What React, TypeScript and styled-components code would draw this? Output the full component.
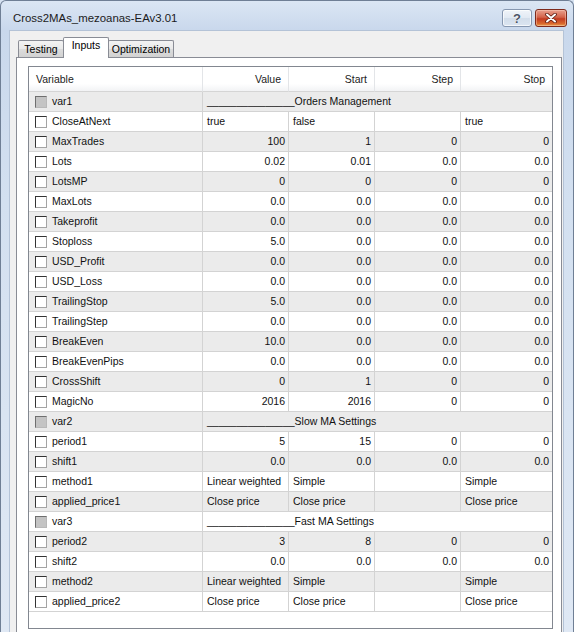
import React from "react"
import styled, { createGlobalStyle } from "styled-components"

const GlobalStyle = createGlobalStyle`
  html, body {
    margin: 0;
    padding: 0;
    overflow: hidden;
  }
  body {
    width: 574px;
    height: 632px;
    background: #d6e2f1;
    font-family: "Liberation Sans", Arial, sans-serif;
  }
`

const Frame = styled.div`
  box-sizing: border-box;
  width: 574px;
  height: 632px;
  display: flex;
  flex-direction: column;
  border: 1px solid #6f7f95;
  border-bottom: none;
  border-radius: 6px 6px 0 0;
  background: linear-gradient(180deg, #dbe6f4 0, #c9d8ec 29px, #d3e0f0 200px, #dfe8f4 632px);
  overflow: hidden;
`

const TitleBar = styled.div`
  height: 29px;
  flex-shrink: 0;
  display: flex;
  align-items: flex-start;
  padding: 0 6px 0 12px;
`

const Title = styled.div`
  flex: 1;
  margin-top: 10px;
  line-height: 14px;
  font-size: 11.4px;
  color: #1b1b1b;
  white-space: nowrap;
`

const CaptionButtons = styled.div`
  display: flex;
  gap: 3px;
  margin-top: 8px;
`

const CaptionButton = styled.div<{ $close?: boolean }>`
  box-sizing: border-box;
  width: ${(p) => (p.$close ? 32 : 30)}px;
  height: 18px;
  border-radius: 3px;
  display: flex;
  align-items: center;
  justify-content: center;
  border: 1px solid ${(p) => (p.$close ? "#7d2a1c" : "#8697b0")};
  background: ${(p) =>
    p.$close
      ? "linear-gradient(180deg, #e8a08e 0, #d4634a 45%, #c23b22 55%, #d9682c 85%, #e9a050 100%)"
      : "linear-gradient(180deg, #f0f4f9 0, #e1e9f3 50%, #d2ddea 51%, #dbe5f1 100%)"};
  box-shadow: inset 0 0 0 1px ${(p) => (p.$close ? "rgba(255,210,190,0.45)" : "rgba(255,255,255,0.7)")};
  font-size: 13px;
  font-weight: bold;
  color: #4a5466;
  text-shadow: 0 0 1px #fff, 0 0 1px #fff;
`

const Client = styled.div`
  flex: 1;
  min-height: 0;
  display: flex;
  flex-direction: column;
  margin: 0 9px 0 8px;
  border: 1px solid #b4c3d7;
  border-bottom: none;
  background: #f0f0f0;
  padding: 6px 1px 0 6px;
`

const TabStrip = styled.div`
  display: flex;
  align-items: flex-end;
  height: 20px;
  margin-left: 2px;
  position: relative;
  z-index: 1;
`

const Tab = styled.div<{ $active?: boolean; $w: number }>`
  box-sizing: border-box;
  width: ${(p) => p.$w}px;
  height: ${(p) => (p.$active ? 21 : 17)}px;
  margin-bottom: ${(p) => (p.$active ? -1 : 0)}px;
  margin-left: -1px;
  border: 1px solid #898c95;
  border-bottom: none;
  border-radius: 2px 2px 0 0;
  background: ${(p) =>
    p.$active ? "#ffffff" : "linear-gradient(180deg, #f3f3f3 0, #e9e9e9 50%, #dcdcdc 51%, #d2d2d2 100%)"};
  font-size: 10.5px;
  color: #000;
  text-align: center;
  line-height: ${(p) => (p.$active ? 15 : 16)}px;
  &:first-child {
    margin-left: 0;
  }
`

const Panel = styled.div`
  flex: 1;
  min-height: 0;
  border: 1px solid #898c95;
  border-bottom: none;
  background: #fff;
  padding: 8px 8px 0 11px;
`

const Grid = styled.div`
  box-sizing: border-box;
  height: 563px;
  border: 1px solid #828790;
  background: #fff;
  display: grid;
  grid-template-columns: 174px 86px 86px 86px 1fr;
  grid-auto-rows: 20px;
  grid-template-rows: 25px;
  align-content: start;
  font-size: 10.5px;
  color: #111;
`

const HeadCell = styled.div<{ $left?: boolean; $last?: boolean }>`
  box-sizing: border-box;
  line-height: 24px;
  padding: ${(p) => (p.$left ? "0 0 0 7px" : "0 7px 0 0")};
  text-align: ${(p) => (p.$left ? "left" : "right")};
  border-bottom: 1px solid #d5d5d5;
  border-right: ${(p) => (p.$last ? "none" : "1px solid #e3e5e8")};
  background: linear-gradient(180deg, #ffffff 0, #ffffff 70%, #f2f3f5 100%);
  color: #222;
`

const Cell = styled.div<{ $shade?: boolean; $num?: boolean; $last?: boolean; $span?: boolean }>`
  box-sizing: border-box;
  ${(p) => (p.$span ? "grid-column: 2 / -1;" : "")}
  line-height: 19px;
  white-space: nowrap;
  overflow: hidden;
  padding: ${(p) => (p.$num ? "0 3px 0 0" : "0 0 0 4px")};
  text-align: ${(p) => (p.$num ? "right" : "left")};
  background: ${(p) => (p.$shade ? "#ebebeb" : "#ffffff")};
  border-bottom: 1px solid #d3d3d3;
  border-right: ${(p) => (p.$last || p.$span ? "none" : "1px solid #d3d3d3")};
`

const NameCell = styled(Cell)`
  display: flex;
  align-items: center;
  gap: 5px;
  padding: 0 0 0 6px;
`

const Check = styled.span<{ $disabled?: boolean }>`
  box-sizing: border-box;
  width: 12px;
  height: 12px;
  flex-shrink: 0;
  border: 1px solid;
  border-color: ${(p) => (p.$disabled ? "#6e6e6e #b8b8b8 #b8b8b8 #6e6e6e" : "#333 #a4a4a4 #a4a4a4 #333")};
  background: ${(p) => (p.$disabled ? "#c4c4c4" : "#fff")};
`

type Row = { name: string; group?: string; vals?: string[] }

const u = "_______________"

const rows: Row[] = [
  { name: "var1", group: u + "Orders Management" },
  { name: "CloseAtNext", vals: ["true", "false", "", "true"] },
  { name: "MaxTrades", vals: ["100", "1", "0", "0"] },
  { name: "Lots", vals: ["0.02", "0.01", "0.0", "0.0"] },
  { name: "LotsMP", vals: ["0", "0", "0", "0"] },
  { name: "MaxLots", vals: ["0.0", "0.0", "0.0", "0.0"] },
  { name: "Takeprofit", vals: ["0.0", "0.0", "0.0", "0.0"] },
  { name: "Stoploss", vals: ["5.0", "0.0", "0.0", "0.0"] },
  { name: "USD_Profit", vals: ["0.0", "0.0", "0.0", "0.0"] },
  { name: "USD_Loss", vals: ["0.0", "0.0", "0.0", "0.0"] },
  { name: "TrailingStop", vals: ["5.0", "0.0", "0.0", "0.0"] },
  { name: "TrailingStep", vals: ["0.0", "0.0", "0.0", "0.0"] },
  { name: "BreakEven", vals: ["10.0", "0.0", "0.0", "0.0"] },
  { name: "BreakEvenPips", vals: ["0.0", "0.0", "0.0", "0.0"] },
  { name: "CrossShift", vals: ["0", "1", "0", "0"] },
  { name: "MagicNo", vals: ["2016", "2016", "0", "0"] },
  { name: "var2", group: u + "Slow MA Settings" },
  { name: "period1", vals: ["5", "15", "0", "0"] },
  { name: "shift1", vals: ["0.0", "0.0", "0.0", "0.0"] },
  { name: "method1", vals: ["Linear weighted", "Simple", "", "Simple"] },
  { name: "applied_price1", vals: ["Close price", "Close price", "", "Close price"] },
  { name: "var3", group: u + "Fast MA Settings" },
  { name: "period2", vals: ["3", "8", "0", "0"] },
  { name: "shift2", vals: ["0.0", "0.0", "0.0", "0.0"] },
  { name: "method2", vals: ["Linear weighted", "Simple", "", "Simple"] },
  { name: "applied_price2", vals: ["Close price", "Close price", "", "Close price"] },
]

const isNum = (s: string) => /^[\d.]+$/.test(s)

const CloseGlyph = () => (
  <svg width="12" height="10" viewBox="0 0 12 10">
    <path d="M2 1.5 L10 8.5 M10 1.5 L2 8.5" stroke="#5a1a10" strokeWidth="3.6" strokeLinecap="round" />
    <path d="M2 1.5 L10 8.5 M10 1.5 L2 8.5" stroke="#ffffff" strokeWidth="2" strokeLinecap="round" />
  </svg>
)

const App: React.FC = () => {
  return (
    <>
      <GlobalStyle />
      <Frame>
        <TitleBar>
          <Title>Cross2MAs_mezoanas-EAv3.01</Title>
          <CaptionButtons>
            <CaptionButton>?</CaptionButton>
            <CaptionButton $close>
              <CloseGlyph />
            </CaptionButton>
          </CaptionButtons>
        </TitleBar>
        <Client>
          <TabStrip>
            <Tab $w={46}>Testing</Tab>
            <Tab $w={46} $active>
              Inputs
            </Tab>
            <Tab $w={66}>Optimization</Tab>
          </TabStrip>
          <Panel>
            <Grid>
              <HeadCell $left>Variable</HeadCell>
              <HeadCell>Value</HeadCell>
              <HeadCell>Start</HeadCell>
              <HeadCell>Step</HeadCell>
              <HeadCell $last>Stop</HeadCell>
              {rows.map((r, i) => {
                const shade = i % 2 === 0
                return (
                  <React.Fragment key={r.name}>
                    <NameCell $shade={shade}>
                      <Check $disabled={!!r.group} />
                      {r.name}
                    </NameCell>
                    {r.group ? (
                      <Cell $shade={shade} $span>
                        {r.group}
                      </Cell>
                    ) : (
                      r.vals!.map((v, j) => (
                        <Cell key={j} $shade={shade} $num={isNum(v)} $last={j === 3}>
                          {v}
                        </Cell>
                      ))
                    )}
                  </React.Fragment>
                )
              })}
            </Grid>
          </Panel>
        </Client>
      </Frame>
    </>
  )
}

export default App
